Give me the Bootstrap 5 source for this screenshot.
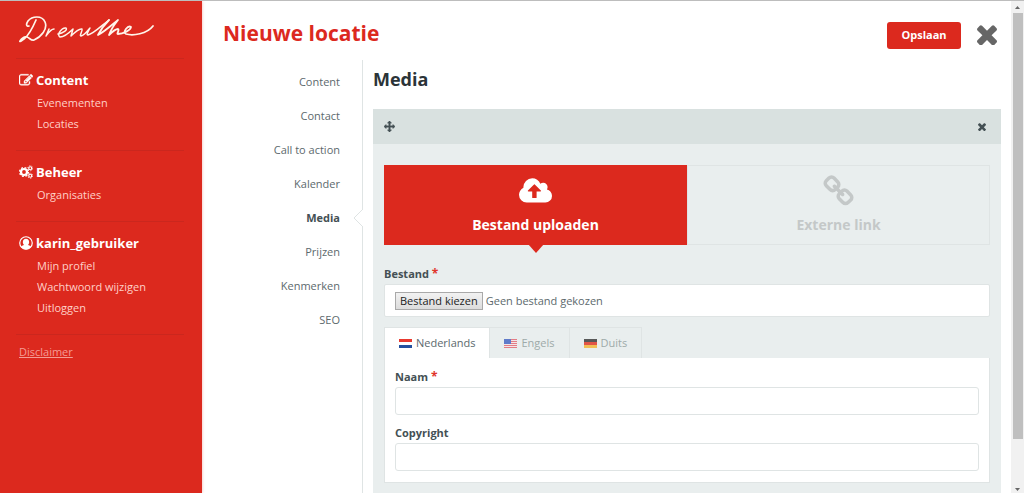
<!DOCTYPE html>
<html lang="nl">
<head>
<meta charset="utf-8">
<meta name="viewport" content="width=device-width, initial-scale=1">
<title>Nieuwe locatie</title>
<link href="https://cdn.jsdelivr.net/npm/bootstrap@5.3.0/dist/css/bootstrap.min.css" rel="stylesheet">
<style>
  :root { --red: #dc291e; --panel: #e9eeee; --line: #dfe4e4; --ink: #5c696d; --dark: #445054; }
  body { font-family: "Open Sans", sans-serif; font-size: 11px; line-height: 20px; color: var(--ink); border-top: 1px solid #bdbdbd; }
  svg { display: block; fill: currentColor; flex: none; }
  a { color: inherit; text-decoration: none; }

  .sidebar { width: 202px; background: var(--red); color: #fff; padding: 14px 18px 0 16px; box-shadow: 0 0 3px rgba(220, 41, 30, .35); z-index: 1; }
  .brand-link { padding: 0 0 13px 3px; }
  .menu-block { border-top: 1px solid #cb271e; padding: 11px 0 16px 3px; }
  .menu-title { font-size: 13px; line-height: 20px; font-weight: 700; gap: 3px; margin: 0 0 2px; }
  .menu-block li a { display: block; line-height: 21px; padding-left: 18px; color: #ffd0c8; }
  .menu-block.last-block { padding-top: 7px; color: #f49c94; }

  .title-bar { padding: 19px 14px 0 21px; height: 59px; }
  .title-bar h1 { font-size: 21px; line-height: 26px; font-weight: 700; color: var(--red); }
  .title-actions { height: 30px; }
  .save-btn { background: var(--red); color: #fff; font-size: 11px; line-height: 16px; font-weight: 700; width: 74px; height: 27px; padding: 0; border: 0; border-radius: 3px; }
  .icon-btn { background: none; border: 0; padding: 0; color: inherit; }
  .close-btn { color: #666; }

  .section-nav { width: 161px; padding-top: 5px; border-right: 1px solid var(--line); text-align: right; }
  .section-nav a { display: block; line-height: 34px; padding-right: 22px; position: relative; }
  .section-nav a.active { font-weight: 700; color: var(--dark); }
  .section-nav a.active svg { position: absolute; right: -1px; top: 8px; }

  .content-col { padding: 6px 10px 0; }
  .content-col h2 { font-size: 18px; line-height: 26px; font-weight: 700; color: #2b3438; margin: 0 0 17px; }
  .panel-head { background: #d9e1e0; height: 35px; padding: 0 15px 0 11px; color: var(--dark); }
  .panel-body { background: var(--panel); padding: 21px 11px 40px; }
  .choice-row { margin-bottom: 21px; }
  .choice { flex: 1 1 0; height: 80px; border: 1px solid var(--line); background: none; font-size: 14px; line-height: 20px; font-weight: 700; color: #c4c8c8; padding: 8px 0 0; gap: 6px; position: relative; }
  .choice.active { background: var(--red); border-color: var(--red); color: #fff; }
  .choice.active::after { content: ""; position: absolute; left: 50%; top: 100%; margin-left: -8px; border: 8px solid transparent; border-top: 9px solid var(--red); border-bottom: 0; }
  .field-label { font-size: 11px; line-height: 16px; font-weight: 700; color: var(--dark); margin: 0 0 2px; }
  .star { color: #e0352b; font-size: 12px; line-height: 10px; }
  .file-box { background: #fff; border: 1px solid var(--line); border-radius: 2px; height: 33px; padding: 0 10px; gap: 3px; margin-bottom: 10px; }
  .file-btn { border: 1px solid #a9a9a9; background: linear-gradient(#f2f2f2, #dcdcdc); color: #222; line-height: 16px; padding: 0 4px; }
  .lang-tab { height: 31px; padding: 0 14px; gap: 4px; font-size: 11px; border: 1px solid var(--line); border-width: 1px 1px 0 0; background: none; color: #9eaaa9; }
  .lang-tab:first-child { border-left-width: 1px; }
  .lang-tab.active { background: #fff; color: var(--ink); }
  .lang-tab:not(.active) svg { opacity: .8; }
  .lang-body { background: #fff; border: 1px solid var(--line); border-top: 0; padding: 11px 10px; }
  .text-field { height: 28px; min-height: 0; border: 1px solid var(--line); border-radius: 3px; padding: 2px 8px; font-size: 12px; }
  .text-field + .field-label { margin-top: 10px; }

  .scroll-rail { width: 13px; background: #f1f1f1; color: #666; }
  .scroll-thumb { width: 10px; flex: 0 1 426px; background: #bfbfbf; }
</style>
</head>
<body class="vh-100 overflow-hidden d-flex">

<aside class="sidebar flex-shrink-0">
  <a class="brand-link d-block" href="#" aria-label="Drenthe">
    <svg width="136" height="30" viewBox="0 0 136 30" style="fill:none" stroke="#fff4ea" stroke-linecap="round" stroke-linejoin="round">
      <path stroke-width="1.7" d="M17 5C14 12 10 20 5 24C3 26 0 27 1 26C3 23 5 21 8 22C11 23 12 26 15 25C22 22 29 14 26 7C23 0 13 1 9 6C7 9 7 12 10 11"/>
      <path stroke-width="1.5" d="M30 14L27 21C30 17 32 14 35 14M39 19C44 18 49 15 47 13C43 12 37 20 41 22C46 22 51 17 54 14L52 21C56 17 60 13 63 14C64 15 60 21 62 21C66 20 69 15 71 13C69 17 67 20 69 20C74 19 81 12 90 5"/>
      <path stroke-width="1.8" d="M90 5C86 9 82 14 79 20C85 17 94 9 99 5C95 10 92 14 90 20C93 17 96 14 99 14C101 15 97 19 99 19C104 19 112 15 112 12C109 10 103 17 107 19C114 21 128 19 134 11"/>
    </svg>
  </a>
  <nav class="menu-block">
    <h2 class="menu-title d-flex align-items-center">
      <svg width="14" height="14" viewBox="0 64 1792 1600"><path d="M888 1184l116-116-152-152-116 116v56h96v96h56zm440-720q-16-16-33 1l-350 350q-17 17-1 33t33-1l350-350q17-17 1-33zm80 594v190q0 119-84.5 203.5t-203.5 84.5h-832q-119 0-203.5-84.5t-84.5-203.5v-832q0-119 84.5-203.5t203.5-84.5h832q63 0 117 25 15 7 18 23 3 17-9 29l-49 49q-14 14-32 8-23-6-45-6h-832q-66 0-113 47t-47 113v832q0 66 47 113t113 47h832q66 0 113-47t47-113v-126q0-13 9-22l64-64q15-15 35-7t20 29zm-96-738l288 288-672 672h-288v-288zm444 132l-92 92-288-288 92-92q28-28 68-28t68 28l152 152q28 28 28 68t-28 68z" stroke="currentColor" stroke-width="50"/></svg>
      Content</h2>
    <ul class="list-unstyled m-0">
      <li><a href="#">Evenementen</a></li>
      <li><a href="#">Locaties</a></li>
    </ul>
  </nav>
  <nav class="menu-block">
    <h2 class="menu-title d-flex align-items-center">
      <svg width="14" height="14" viewBox="0 0 28 28" style="fill:none" stroke="currentColor"><circle cx="10" cy="14" r="6" stroke-width="4.4"/><circle cx="10" cy="14" r="9" stroke-width="2.4" stroke-dasharray="3.8 3.27"/><circle cx="22.5" cy="6.5" r="3" stroke-width="2.4"/><circle cx="22.5" cy="6.5" r="5" stroke-width="1.6" stroke-dasharray="2.6 2.6"/><circle cx="22.5" cy="21.5" r="3" stroke-width="2.4"/><circle cx="22.5" cy="21.5" r="5" stroke-width="1.6" stroke-dasharray="2.6 2.6"/></svg>
      Beheer</h2>
    <ul class="list-unstyled m-0">
      <li><a href="#">Organisaties</a></li>
    </ul>
  </nav>
  <nav class="menu-block">
    <h2 class="menu-title d-flex align-items-center">
      <svg width="14" height="14" viewBox="0 0 28 28"><circle cx="14" cy="14" r="12.5" fill="none" stroke="currentColor" stroke-width="2.4"/><path d="M14 5.5c4 0 6.300 2.700 6.300 6.500 0 2.600-1 4.700-2.500 6 3 .5 5.200 1.500 6.200 4-2.400 3-6 4.800-10 4.800S6.400 25 4 22c1-2.500 3.200-3.500 6.200-4-1.500-1.300-2.500-3.400-2.500-6C7.700 8.200 10 5.500 14 5.500z"/></svg>
      karin_gebruiker</h2>
    <ul class="list-unstyled m-0">
      <li><a href="#">Mijn profiel</a></li>
      <li><a href="#">Wachtwoord wijzigen</a></li>
      <li><a href="#">Uitloggen</a></li>
    </ul>
  </nav>
  <div class="menu-block last-block"><a class="text-decoration-underline" href="#">Disclaimer</a></div>
</aside>

<main class="flex-grow-1 d-flex flex-column">
  <header class="title-bar d-flex justify-content-between align-items-start flex-shrink-0">
    <h1 class="m-0">Nieuwe locatie</h1>
    <div class="title-actions d-flex align-items-center gap-3">
      <button class="save-btn" type="button">Opslaan</button>
      <button class="icon-btn close-btn" type="button" aria-label="Sluiten">
        <svg width="20" height="20" viewBox="302 344 1188 1188"><path d="M1490 1322q0 40-28 68l-136 136q-28 28-68 28t-68-28l-294-294-294 294q-28 28-68 28t-68-28l-136-136q-28-28-28-68t28-68l294-294-294-294q-28-28-28-68t28-68l136-136q28-28 68-28t68 28l294 294 294-294q28-28 68-28t68 28l136 136q28 28 28 68t-28 68l-294 294 294 294q28 28 28 68z"/></svg>
      </button>
    </div>
  </header>

  <div class="d-flex flex-grow-1">
    <nav class="section-nav flex-shrink-0">
      <a href="#">Content</a>
      <a href="#">Contact</a>
      <a href="#">Call to action</a>
      <a href="#">Kalender</a>
      <a class="active" href="#" aria-current="page">Media<svg width="10" height="18" viewBox="0 0 10 18"><path d="M10 0L1 9L10 18" fill="#fff" stroke="#dfe4e4"/></svg></a>
      <a href="#">Prijzen</a>
      <a href="#">Kenmerken</a>
      <a href="#">SEO</a>
    </nav>

    <section class="content-col flex-grow-1">
      <h2>Media</h2>
      <div class="panel-head d-flex align-items-center justify-content-between">
        <button class="icon-btn" type="button" aria-label="Verplaatsen"><svg width="11" height="11" viewBox="0 0 1792 1792"><path stroke="currentColor" stroke-width="60" d="M1792 896q0 26-19 45l-256 256q-19 19-45 19t-45-19-19-45v-128h-384v384h128q26 0 45 19t19 45-19 45l-256 256q-19 19-45 19t-45-19l-256-256q-19-19-19-45t19-45 45-19h128v-384h-384v128q0 26-19 45t-45 19-45-19l-256-256q-19-19-19-45t19-45l256-256q19-19 45-19t45 19 19 45v128h384v-384h-128q-26 0-45-19t-19-45 19-45l256-256q19-19 45-19t45 19l256 256q19 19 19 45t-19 45-45 19h-128v384h384v-128q0-26 19-45t45-19 45 19l256 256q19 19 19 45z"/></svg></button>
        <button class="icon-btn" type="button" aria-label="Verwijderen"><svg width="8" height="8" viewBox="302 344 1188 1188"><path d="M1490 1322q0 40-28 68l-136 136q-28 28-68 28t-68-28l-294-294-294 294q-28 28-68 28t-68-28l-136-136q-28-28-28-68t28-68l294-294-294-294q-28-28-28-68t28-68l136-136q28-28 68-28t68 28l294 294 294-294q28-28 68-28t68 28l136 136q28 28 28 68t-28 68l-294 294 294 294q28 28 28 68z"/></svg></button>
      </div>
      <div class="panel-body">
        <div class="choice-row d-flex">
          <button class="choice active d-flex flex-column align-items-center" type="button">
            <svg width="33" height="35" viewBox="-64 -122 1920 2036"><path d="M1216 864q0-14-9-23l-352-352q-9-9-23-9t-23 9l-351 351q-10 12-10 24 0 14 9 23t23 9h224v352q0 13 9.500 22.500t22.500 9.500h192q13 0 22.500-9.500t9.500-22.500v-352h224q13 0 22.500-9.500t9.500-22.500zm640 288q0 159-112.500 271.500t-271.500 112.500h-1088q-185 0-316.500-131.500t-131.500-316.500q0-130 70-240t188-165q-2-30-2-43 0-212 150-362t362-150q156 0 285.500 87t188.500 231q71-62 166-62 106 0 181 75t75 181q0 76-41 138 130 31 213.500 135.500t83.500 238.500z"/></svg>
            Bestand uploaden
          </button>
          <button class="choice d-flex flex-column align-items-center" type="button">
            <svg width="33" height="35" viewBox="0 0 1792 1900"><path transform="translate(0 54)" d="M1520 1216q0-40-28-68l-208-208q-28-28-68-28-42 0-72 32 3 3 19 18.500t21.500 21.500 15 19 13 25.500 3.500 27.500q0 40-28 68t-68 28q-15 0-27.500-3.500t-25.500-13-19-15-21.500-21.500-18.500-19q-33 31-33 73 0 40 28 68l206 207q27 27 68 27 40 0 68-26l147-146q28-28 28-67zm-703-705q0-40-28-68l-206-207q-28-28-68-28-39 0-68 27l-147 146q-28 28-28 67 0 40 28 68l208 208q27 27 68 27 42 0 72-31-3-3-19-18.500t-21.500-21.500-15-19-13-25.500-3.500-27.500q0-40 28-68t68-28q15 0 27.500 3.500t25.500 13 19 15 21.500 21.500 18.500 19q33-31 33-73zm895 705q0 120-85 203l-147 146q-83 83-203 83-121 0-204-85l-206-207q-83-83-83-203 0-123 88-209l-88-88q-86 88-208 88-120 0-204-84l-208-208q-84-84-84-204t85-203l147-146q83-83 203-83 121 0 204 85l206 207q83 83 83 203 0 123-88 209l88 88q86-88 208-88 120 0 204 84l208 208q84 84 84 204z"/></svg>
            Externe link
          </button>
        </div>

        <label class="field-label d-block" for="bestand">Bestand <span class="star">*</span></label>
        <div class="file-box d-flex align-items-center">
          <input class="d-none" type="file" id="bestand">
          <button class="file-btn" type="button" onclick="document.getElementById('bestand').click()">Bestand kiezen</button>
          <span>Geen bestand gekozen</span>
        </div>

        <div class="d-flex" role="tablist">
          <button class="lang-tab active d-flex align-items-center" type="button" role="tab" aria-selected="true">
            <svg width="13" height="9" viewBox="0 0 13 9"><path fill="#e8392f" d="M0 0h13v3H0z"/><path fill="#fff" d="M0 3h13v3H0z"/><path fill="#24509f" d="M0 6h13v3H0z"/></svg>Nederlands</button>
          <button class="lang-tab d-flex align-items-center" type="button" role="tab" aria-selected="false">
            <svg width="13" height="9" viewBox="0 0 13 9"><path fill="#f6e4e6" d="M0 0h13v9H0z"/><path fill="#e2606a" d="M0 0h13v1H0zM0 2h13v1H0zM0 4h13v1H0zM0 6h13v1H0zM0 8h13v1H0z"/><path fill="#3f5fc0" d="M0 0h7v5H0z"/></svg>Engels</button>
          <button class="lang-tab d-flex align-items-center" type="button" role="tab" aria-selected="false">
            <svg width="13" height="9" viewBox="0 0 13 9"><path fill="#333" d="M0 0h13v3H0z"/><path fill="#e0301e" d="M0 3h13v3H0z"/><path fill="#f5b430" d="M0 6h13v3H0z"/></svg>Duits</button>
        </div>
        <div class="lang-body">
          <label class="field-label d-block" for="naam">Naam <span class="star">*</span></label>
          <input class="form-control text-field" type="text" id="naam">
          <label class="field-label d-block" for="copyright">Copyright</label>
          <input class="form-control text-field" type="text" id="copyright">
        </div>
      </div>
    </section>
  </div>
</main>

<div class="scroll-rail d-flex flex-column align-items-center flex-shrink-0" aria-hidden="true">
  <svg width="7" height="12" viewBox="0 0 7 12"><path d="M1 8L3.500 5L6 8z"/></svg>
  <div class="scroll-thumb"></div>
  <svg class="mt-auto" width="7" height="6" viewBox="0 0 7 6"><path d="M1 1L3.500 4L6 1z"/></svg>
</div>

<script src="https://cdn.jsdelivr.net/npm/bootstrap@5.3.0/dist/js/bootstrap.bundle.min.js"></script>
</body>
</html>
